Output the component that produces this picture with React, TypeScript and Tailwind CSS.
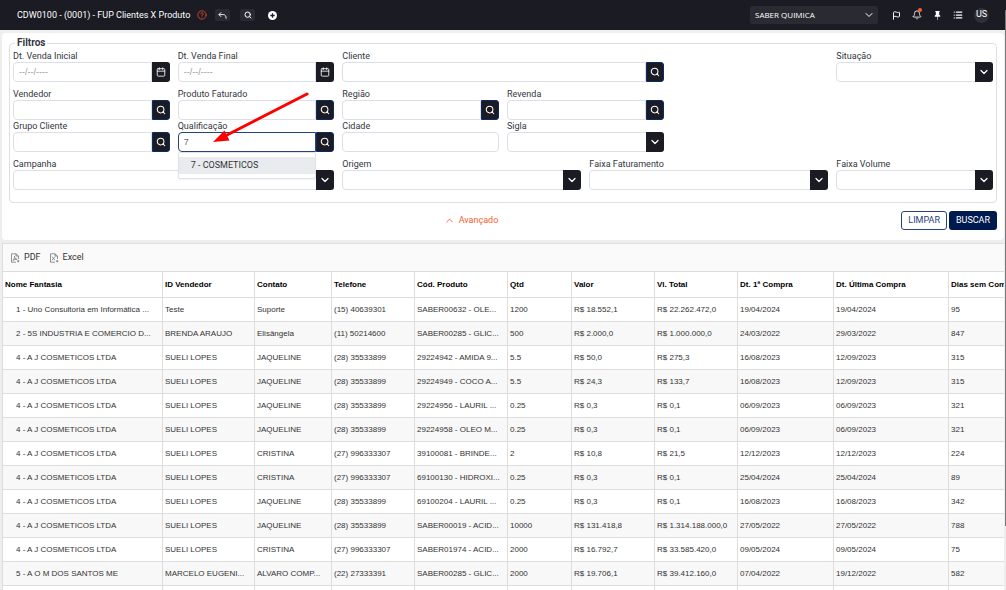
import type { ReactNode } from 'react';
import { Bell, Calendar, ChevronDown, ChevronUp, CircleHelp, Flag, List, Search } from 'lucide-react';
import { BsPinFill } from 'react-icons/bs';

const columns = [
  { title: 'Nome Fantasia', width: 'w-[160px]' },
  { title: 'ID Vendedor', width: 'w-[92px]' },
  { title: 'Contato', width: 'w-[77px]' },
  { title: 'Telefone', width: 'w-[83px]' },
  { title: 'Cód. Produto', width: 'w-[93px]' },
  { title: 'Qtd', width: 'w-[64px]' },
  { title: 'Valor', width: 'w-[83px]' },
  { title: 'Vl. Total', width: 'w-[83px]' },
  { title: 'Dt. 1ª Compra', width: 'w-[96px]' },
  { title: 'Dt. Última Compra', width: 'w-[115px]' },
  { title: 'Dias sem Compra', width: 'w-[115px]' },
];

const AJ = '4 - A J COSMETICOS LTDA';

const rows = [
  ['1 - Uno Consultoria em Informática ...', 'Teste', 'Suporte', '(15) 40639301', 'SABER00632 - OLE...', '1200', 'R$ 18.552,1', 'R$ 22.262.472,0', '19/04/2024', '19/04/2024', '95'],
  ['2 - 5S INDUSTRIA E COMERCIO D...', 'BRENDA ARAUJO', 'Elisângela', '(11) 50214600', 'SABER00285 - GLIC...', '500', 'R$ 2.000,0', 'R$ 1.000.000,0', '24/03/2022', '29/03/2022', '847'],
  [AJ, 'SUELI LOPES', 'JAQUELINE', '(28) 35533899', '29224942 - AMIDA 9...', '5.5', 'R$ 50,0', 'R$ 275,3', '16/08/2023', '12/09/2023', '315'],
  [AJ, 'SUELI LOPES', 'JAQUELINE', '(28) 35533899', '29224949 - COCO A...', '5.5', 'R$ 24,3', 'R$ 133,7', '16/08/2023', '12/09/2023', '315'],
  [AJ, 'SUELI LOPES', 'JAQUELINE', '(28) 35533899', '29224956 - LAURIL ...', '0.25', 'R$ 0,3', 'R$ 0,1', '06/09/2023', '06/09/2023', '321'],
  [AJ, 'SUELI LOPES', 'JAQUELINE', '(28) 35533899', '29224958 - OLEO M...', '0.25', 'R$ 0,3', 'R$ 0,1', '06/09/2023', '06/09/2023', '321'],
  [AJ, 'SUELI LOPES', 'CRISTINA', '(27) 996333307', '39100081 - BRINDE...', '2', 'R$ 10,8', 'R$ 21,5', '12/12/2023', '12/12/2023', '224'],
  [AJ, 'SUELI LOPES', 'CRISTINA', '(27) 996333307', '69100130 - HIDROXI...', '0.25', 'R$ 0,3', 'R$ 0,1', '25/04/2024', '25/04/2024', '89'],
  [AJ, 'SUELI LOPES', 'JAQUELINE', '(28) 35533899', '69100204 - LAURIL ...', '0.25', 'R$ 0,3', 'R$ 0,1', '16/08/2023', '16/08/2023', '342'],
  [AJ, 'SUELI LOPES', 'JAQUELINE', '(28) 35533899', 'SABER00019 - ACID...', '10000', 'R$ 131.418,8', 'R$ 1.314.188.000,0', '27/05/2022', '27/05/2022', '788'],
  [AJ, 'SUELI LOPES', 'CRISTINA', '(27) 996333307', 'SABER01974 - ACID...', '2000', 'R$ 16.792,7', 'R$ 33.585.420,0', '09/05/2024', '09/05/2024', '75'],
  ['5 - A O M DOS SANTOS ME', 'MARCELO EUGENI...', 'ALVARO COMP...', '(22) 27333391', 'SABER00285 - GLIC...', '2000', 'R$ 19.706,1', 'R$ 39.412.160,0', '07/04/2022', '19/12/2022', '582'],
  ['', '', '', '', '', '', '', '', '', '', ''],
];

type FieldProps = {
  id: string;
  label: string;
  span: string;
  kind: 'date' | 'search' | 'select' | 'text';
  value?: string;
  children?: ReactNode;
};

const Field = ({ id, label, span, kind, value, children }: FieldProps) => (
  <div className={`relative flex flex-col ${span}`}>
    <label htmlFor={id} className="h-3 text-[9px] leading-3 text-[#33373d]">{label}</label>
    {kind === 'select' ? (
      <div className="relative flex h-5">
        <select id={id} className="h-5 w-full appearance-none rounded border border-[#dce0e6] bg-white px-1 text-[9px]" />
        <span className="pointer-events-none absolute inset-y-0 right-0 flex w-[18px] items-center justify-center rounded-r-[3px] bg-[#1b1b23] text-white">
          <ChevronDown size={12} strokeWidth={2.5} />
        </span>
      </div>
    ) : (
      <div className="flex h-5">
        <input
          id={id}
          type="text"
          defaultValue={value}
          placeholder={kind === 'date' ? '--/--/----' : undefined}
          className={`h-5 w-full min-w-0 border bg-white px-[5px] font-['Liberation_Sans',Arial,sans-serif] text-[9px] text-[#666] placeholder:text-[#999] ${kind === 'text' ? 'rounded' : 'rounded-l'} ${value ? 'border-[#26427c]' : 'border-[#dce0e6]'}`}
        />
        {kind === 'date' && (
          <button type="button" aria-label={`Calendário ${label}`} className="flex w-[18px] shrink-0 items-center justify-center rounded-r-[3px] bg-[#1b1b23] text-white">
            <Calendar size={10} />
          </button>
        )}
        {kind === 'search' && (
          <button type="button" aria-label={`Pesquisar ${label}`} className="flex w-[18px] shrink-0 items-center justify-center rounded-r-[3px] border border-[#0b2a66] bg-[#1b1b23] text-white">
            <Search size={10} strokeWidth={2.5} />
          </button>
        )}
      </div>
    )}
    {children}
  </div>
);

const FileIcon = ({ sheet }: { sheet?: boolean }) => (
  <svg viewBox="0 0 10 10" className="size-2.5 text-[#777]" fill="none" stroke="currentColor" strokeWidth="0.8">
    <path d="M8.5 6V3L6 .8H1.5v8.4H6M6 .8V3h2.5" />
    {sheet ? <path d="m3 3.6 3 3.6M6 3.6 3 7.2" /> : <path d="M2.8 7.4C4 6.6 4.6 5 4.5 3.2c.2 1.8 1 3 2.6 3.1-1.6-.1-3 .3-4.3 1.1" />}
    <path d="M7 8.2h2.4M8.2 7v2.4" />
  </svg>
);

const Header = () => (
  <header className="flex h-[30px] shrink-0 items-center bg-[#1b1b23] px-[17px] text-white">
    <h1 className="text-[9px] leading-3 whitespace-nowrap">CDW0100 - (0001) - FUP Clientes X Produto</h1>
    <div className="ml-1 flex items-center gap-2.5">
      <button type="button" aria-label="Ajuda" className="flex size-[15px] items-center justify-center text-[#e8492f]">
        <CircleHelp size={10} />
      </button>
      <button type="button" aria-label="Voltar" className="-ml-1 flex h-3 w-[15px] items-center justify-center rounded-xs bg-[#2a2a33]">
        <svg viewBox="0 0 10 10" className="size-[9px]" fill="none" stroke="currentColor" strokeWidth="1">
          <path d="M3.5 1.5 1 4l2.5 2.5M1 4h5q3 0 3 4.5" />
        </svg>
      </button>
      <button type="button" aria-label="Pesquisar" className="flex h-3 w-[15px] items-center justify-center rounded-xs bg-[#2a2a33]">
        <Search size={8} strokeWidth={3} />
      </button>
      <button type="button" aria-label="Adicionar" className="flex h-3 w-[15px] items-center justify-center">
        <svg viewBox="0 0 10 10" className="size-[9px]">
          <circle cx="5" cy="5" r="5" fill="white" />
          <path d="M5 2.6v4.8M2.6 5h4.8" stroke="#1b1b23" strokeWidth="1.4" />
        </svg>
      </button>
    </div>
    <div className="relative ml-auto flex h-[18px] w-32">
      <select aria-label="Empresa" className="h-[18px] w-full appearance-none rounded-xs bg-[#2a2a33] pl-[5px] font-['Open_Sans',sans-serif] text-[8px] font-medium text-white">
        <option>SABER QUIMICA</option>
      </select>
      <ChevronDown size={12} className="pointer-events-none absolute top-[3px] right-[3px]" />
    </div>
    <nav className="ml-3.5 flex items-center gap-[11px]">
      <button type="button" aria-label="Avisos"><Flag size={9} strokeWidth={2.5} /></button>
      <button type="button" aria-label="Notificações" className="relative">
        <Bell size={10} />
        <span className="absolute -top-0.5 right-0 size-1 rounded-full bg-[#ff5a2a]" />
      </button>
      <button type="button" aria-label="Fixar"><BsPinFill size={9} /></button>
      <button type="button" aria-label="Menu"><List size={10} strokeWidth={3} /></button>
      <button type="button" className="flex size-[15px] items-center justify-center rounded-full bg-[#2f2f38] text-[9px]">US</button>
    </nav>
  </header>
);

const Arrow = () => (
  <svg viewBox="0 0 96 52" className="pointer-events-none absolute -top-7 left-[35px] z-20 h-[52px] w-24">
    <path d="M94 2 14 43" stroke="#f00" strokeWidth="3" strokeLinecap="round" />
    <path d="M0 50 11.5 38.5 16.5 48.5Z" fill="#f00" />
  </svg>
);

const Filters = () => (
  <form className="rounded bg-white px-[7px] pt-1.5 pb-2.5">
    <fieldset className="rounded border border-[#dcdfe3] px-[3px] pt-[3px] pb-3">
      <legend className="ml-0.5 h-2 px-0.5 text-[10px] leading-2 font-bold text-[#33373d]">Filtros</legend>
      <div className="mb-1.5 grid grid-cols-24 gap-x-2">
        <Field id="ini" label="Dt. Venda Inicial" span="col-span-4" kind="date" />
        <Field id="fim" label="Dt. Venda Final" span="col-span-4" kind="date" />
        <Field id="cliente" label="Cliente" span="col-span-8" kind="search" />
        <Field id="situacao" label="Situação" span="col-span-4 col-start-21" kind="select" />
      </div>
      <div className="grid grid-cols-24 gap-x-2">
        <Field id="vendedor" label="Vendedor" span="col-span-4" kind="search" />
        <Field id="produto" label="Produto Faturado" span="col-span-4" kind="search" />
        <Field id="regiao" label="Região" span="col-span-4" kind="search" />
        <Field id="revenda" label="Revenda" span="col-span-4" kind="search" />
      </div>
      <div className="mb-1.5 grid grid-cols-24 gap-x-2">
        <Field id="grupo" label="Grupo Cliente" span="col-span-4" kind="search" />
        <Field id="qualificacao" label="Qualificação" span="col-span-4" kind="search" value="7">
          <Arrow />
          <ul className="absolute top-8 right-[18px] left-0 z-10 rounded-xs border border-[#dfe2e6] bg-white py-1 shadow-xs">
            <li className="h-[17px] bg-[#e9ecef] pl-3 text-[9px] leading-[17px] text-[#333]">7 - COSMETICOS</li>
          </ul>
        </Field>
        <Field id="cidade" label="Cidade" span="col-span-4" kind="text" />
        <Field id="sigla" label="Sigla" span="col-span-4" kind="select" />
      </div>
      <div className="grid grid-cols-24 gap-x-2">
        <Field id="campanha" label="Campanha" span="col-span-8" kind="select" />
        <Field id="origem" label="Origem" span="col-span-6" kind="select" />
        <Field id="faturamento" label="Faixa Faturamento" span="col-span-6" kind="select" />
        <Field id="volume" label="Faixa Volume" span="col-span-4" kind="select" />
      </div>
    </fieldset>
    <div className="mt-2 grid grid-cols-[1fr_auto_1fr] items-center">
      <button type="button" className="col-start-2 flex items-center gap-1 pr-16 text-[9px] text-[#f4612f]">
        <ChevronUp size={11} />
        Avançado
      </button>
      <div className="flex justify-end gap-0.5 text-[9px]">
        <button type="reset" className="h-[19px] rounded-[3px] border border-[#26427c] px-1.5 text-[#26427c]">LIMPAR</button>
        <button type="submit" className="h-[19px] rounded-[3px] bg-[#00194f] px-[7px] text-white">BUSCAR</button>
      </div>
    </div>
  </form>
);

const Results = () => (
  <section className="mt-[3px] border-t border-l border-[#ddd] bg-[#fafafa] font-['Liberation_Sans',Arial,sans-serif]">
    <div className="flex h-[27px] items-center gap-2 px-[7px] font-[Roboto,sans-serif] text-[9px] text-[#333]">
      <button type="button" className="flex items-center gap-1"><FileIcon />PDF</button>
      <button type="button" className="flex items-center gap-1"><FileIcon sheet />Excel</button>
    </div>
    <div className="overflow-hidden">
      <table className="w-[1061px] table-fixed border-separate border-spacing-0 text-left text-[8px] text-[#333]">
        <thead>
          <tr className="h-[27px] bg-white text-black">
            {columns.map((c) => (
              <th key={c.title} className={`${c.width} border-t border-r border-b border-[#ddd] px-0.5 py-0 font-bold whitespace-nowrap`}>{c.title}</th>
            ))}
          </tr>
        </thead>
        <tbody>
          {rows.map((row, i) => (
            <tr key={i} className="h-6 bg-white even:bg-[#f8f8f8]">
              {row.map((cell, j) => (
                <td key={j} className="border-r border-b border-[#ddd] px-0.5 py-0 whitespace-nowrap first:pl-[13px]">{cell}</td>
              ))}
            </tr>
          ))}
        </tbody>
      </table>
    </div>
  </section>
);

export default function App() {
  return (
    <div className="relative flex h-screen flex-col overflow-hidden bg-[#eee] font-[Roboto,sans-serif]">
      <Header />
      <main className="mt-[3px] mr-0.5 ml-0.5 min-h-0 flex-1 overflow-hidden">
        <Filters />
        <Results />
      </main>
      {/* page scroll thumb */}
      <div className="absolute top-2.5 right-0 bottom-16 w-px bg-[#777]" />
    </div>
  );
}
